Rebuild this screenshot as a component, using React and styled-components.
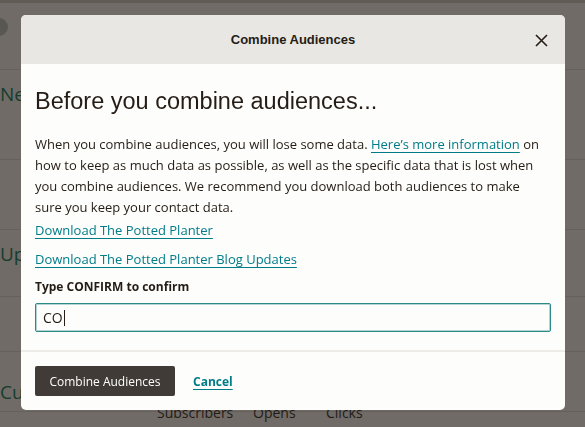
import React from "react";
import styled, { createGlobalStyle } from "styled-components";

const Global = createGlobalStyle`
  html, body { margin: 0; padding: 0; background: #ffffff; }
  body { font-family: "Open Sans", "Liberation Sans", Arial, sans-serif; color: #241c15; overflow: hidden; }
  * { box-sizing: border-box; }
`;

const Page = styled.div`
  width: 585px;
  height: 427px;
  background: #ffffff;
  border-top: 3px solid #d6d3cf;
  display: flex;
  flex-direction: column;
`;

const PageRow = styled.div`
  height: ${(p) => p.h}px;
  flex: none;
  border-bottom: 1px solid #e2e0dc;
  display: flex;
  align-items: flex-start;
  padding-top: ${(p) => p.top || 0}px;
  font-size: 19px;
  line-height: 22px;
  color: #007c5a;
`;

const Avatar = styled.div`
  width: 18px;
  height: 18px;
  margin-left: -10px;
  border-radius: 50%;
  background: #bcc6c0;
`;

const Cols = styled.div`
  display: grid;
  grid-template-columns: 96px 73px auto;
  padding-left: 157px;
  margin-top: -8px;
  font-size: 14px;
  line-height: 18px;
  color: #241c15;
`;

const Overlay = styled.div`
  position: fixed;
  inset: 0;
  background: rgba(36, 28, 21, 0.65);
  display: flex;
  align-items: flex-start;
  justify-content: flex-start;
  padding: 15px 0 0 21px;
`;

const Modal = styled.div`
  width: 544px;
  height: 395px;
  background: #fdfdfc;
  border-radius: 5px;
  overflow: hidden;
  display: flex;
  flex-direction: column;
`;

const Header = styled.div`
  height: 49px;
  flex: none;
  background: #e9e7e3;
  display: flex;
  align-items: center;
  justify-content: center;
  position: relative;
`;

const Title = styled.h2`
  margin: 0;
  font-family: "Liberation Sans", Arial, sans-serif;
  font-size: 13px;
  font-weight: 700;
  color: #241c15;
`;

const Close = styled.button`
  position: absolute;
  right: 16px;
  top: 17px;
  width: 16px;
  height: 16px;
  padding: 0;
  border: 0;
  background: transparent;
  display: flex;
  align-items: center;
  justify-content: center;
`;

const Body = styled.div`
  padding: 22px 14px 0 14px;
  display: flex;
  flex-direction: column;
`;

const Heading = styled.h1`
  margin: 0 0 18px 0;
  font-family: "Liberation Sans", Arial, sans-serif;
  font-size: 23.5px;
  font-weight: 400;
  line-height: 30px;
  color: #241c15;
`;

const Para = styled.p`
  margin: 0 0 2px 0;
  font-size: 13px;
  line-height: 21px;
  color: #241c15;
`;

const Link = styled.a`
  color: #007c89;
  text-decoration: underline;
  text-underline-offset: 3px;
  text-decoration-thickness: 1px;
  font-weight: ${(p) => (p.bold ? 700 : 400)};
`;

const LinkLine = styled.div`
  font-size: 13px;
  line-height: 21px;
  margin-bottom: 8px;
`;

const Label = styled.label`
  display: block;
  font-size: 12px;
  font-weight: 700;
  line-height: 16px;
  margin-top: 1px;
  margin-bottom: 8px;
  color: #241c15;
`;

const Input = styled.div`
  width: 516px;
  height: 29px;
  flex: none;
  border: 1px solid #2b8a86;
  border-radius: 2px;
  box-shadow: inset 0 0 0 1px rgba(43, 138, 134, 0.35);
  display: flex;
  align-items: center;
  padding-left: 7px;
  font-size: 14px;
  color: #241c15;
`;

const Caret = styled.span`
  display: inline-block;
  width: 1px;
  height: 16px;
  background: #241c15;
  margin-left: 1px;
`;

const Divider = styled.div`
  height: 2px;
  flex: none;
  background: #eeece9;
  margin-top: 18px;
`;

const Footer = styled.div`
  display: flex;
  align-items: center;
  gap: 18px;
  padding: 14px 14px 0 14px;
`;

const Primary = styled.button`
  width: 140px;
  height: 30px;
  background: #403b37;
  color: #ffffff;
  border: 0;
  border-radius: 2px;
  font-family: "Open Sans", "Liberation Sans", Arial, sans-serif;
  font-size: 12px;
`;

const CancelLink = styled(Link)`
  font-size: 12px;
`;

export default function App() {
  return (
    <>
      <Global />
      <Page>
        <PageRow h={67} top={15}><Avatar /></PageRow>
        <PageRow h={90} top={13}>New</PageRow>
        <PageRow h={70} />
        <PageRow h={67} top={13}>Upd</PageRow>
        <PageRow h={55} />
        <PageRow h={60} top={29}>Cust</PageRow>
        <Cols>
          <span>Subscribers</span>
          <span>Opens</span>
          <span>Clicks</span>
        </Cols>
      </Page>
      <Overlay>
        <Modal role="dialog" aria-label="Combine Audiences">
          <Header>
            <Title>Combine Audiences</Title>
            <Close aria-label="Close">
              <svg width="13" height="13" viewBox="0 0 13 13">
                <path d="M1 1 L12 12 M12 1 L1 12" stroke="#241c15" strokeWidth="1.6" />
              </svg>
            </Close>
          </Header>
          <Body>
            <Heading>Before you combine audiences...</Heading>
            <Para>
              When you combine audiences, you will lose some data.{" "}
              <Link href="#">Here’s more information</Link> on how to keep as much data as
              possible, as well as the specific data that is lost when you combine audiences.
              We recommend you download both audiences to make
              <br />
              sure you keep your contact data.
            </Para>
            <LinkLine><Link href="#">Download The Potted Planter</Link></LinkLine>
            <LinkLine><Link href="#">Download The Potted Planter Blog Updates</Link></LinkLine>
            <Label>Type CONFIRM to confirm</Label>
            <Input>CO<Caret /></Input>
          </Body>
          <Divider />
          <Footer>
            <Primary>Combine Audiences</Primary>
            <CancelLink href="#" bold>Cancel</CancelLink>
          </Footer>
        </Modal>
      </Overlay>
    </>
  );
}
